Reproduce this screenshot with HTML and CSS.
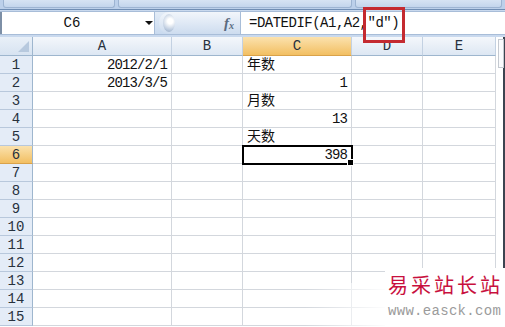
FILE: index.html
```html
<!DOCTYPE html>
<html lang="zh-CN">
<head>
    <meta charset="UTF-8">
    <meta name="viewport" content="width=device-width, initial-scale=1.0">
    <title>DATEDIF</title>
    <link rel="stylesheet" href="styles.css">
</head>
<body>
    <div class="window">
        <!-- Bottom edge of the ribbon -->
        <div class="ribbon-edge">
            <div class="rb-btn rb-1"></div>
            <div class="rb-btn rb-2"></div>
            <div class="rb-btn rb-3"></div>
        </div>

        <!-- Formula bar -->
        <div class="formula-bar">
            <div class="name-box">
                <span class="name-text">C6</span>
                <span class="caret"></span>
            </div>
            <div class="fx-knob">
                <span class="grip"></span>
                <span class="fx">f<sub>x</sub></span>
            </div>
            <div class="formula-input">=DATEDIF(A1,A2,"d")</div>
        </div>

        <!-- Sheet -->
        <div class="sheet-wrap">
            <div class="sheet" id="sheet"></div>
            <div class="vscroll">
                <div class="split-box"></div>
            </div>
        </div>

        <!-- Red highlight around the "d" argument -->
        <div class="mark-box"></div>

        <!-- Watermark -->
        <div class="fade"></div>
        <div class="watermark">
            <div class="wm-title">易采站长站</div>
            <div class="wm-url">www.easck.com</div>
        </div>
    </div>

    <script>
        const cols = ['A', 'B', 'C', 'D', 'E'];
        const values = {
            A1: '2012/2/1',
            A2: '2013/3/5',
            C1: '年数',
            C2: '1',
            C3: '月数',
            C4: '13',
            C5: '天数',
            C6: '398'
        };
        const active = { col: 'C', row: 6 };
        const sheet = document.getElementById('sheet');

        // header row
        const corner = document.createElement('div');
        corner.className = 'corner';
        sheet.appendChild(corner);
        cols.forEach(c => {
            const h = document.createElement('div');
            h.className = 'col-head' + (c === active.col ? ' hl' : '');
            h.textContent = c;
            sheet.appendChild(h);
        });

        for (let r = 1; r <= 15; r++) {
            const rh = document.createElement('div');
            rh.className = 'row-head' + (r === active.row ? ' hl' : '');
            rh.textContent = r;
            sheet.appendChild(rh);

            cols.forEach(c => {
                const cell = document.createElement('div');
                cell.className = 'cell';
                const v = values[c + r];
                if (v) {
                    cell.textContent = v;
                    if (/^[0-9\/]+$/.test(v)) cell.classList.add('num');
                }
                if (c === active.col && r === active.row) {
                    cell.classList.add('active');
                    const handle = document.createElement('span');
                    handle.className = 'handle';
                    cell.appendChild(handle);
                }
                sheet.appendChild(cell);
            });
        }
    </script>
</body>
</html>
```

FILE: styles.css
```css
body {
    margin: 0;
    font-family: "Liberation Mono", "Noto Sans CJK SC", monospace;
    background: #ffffff;
}

.window {
    width: 505px;
    height: 327px;
    position: relative;
    overflow: hidden;
    background: #c9d9ee;
}

/* Ribbon edge */
.ribbon-edge {
    height: 10px;
    display: flex;
    gap: 3px;
    padding: 0 3px 0 3px;
    background: #bcd0ea;
    border-bottom: 1px solid #6f8db3;
    box-sizing: border-box;
}

.rb-btn {
    height: 7px;
    background: linear-gradient(to bottom, #d6e3f3, #c3d5ec);
    border: 1px solid #9db4d2;
    border-top: none;
    border-radius: 0 0 3px 3px;
}

.rb-1 { width: 110px; }
.rb-2 { width: 232px; }
.rb-3 { flex: 1; }

/* Formula bar */
.formula-bar {
    height: 22px;
    margin-top: 1px;
    display: flex;
    background: linear-gradient(to bottom, #e3ecf7, #c9daef);
    border-top: 1px solid #a8bdd8;
    border-bottom: 1px solid #a8bdd8;
}

.name-box {
    width: 155px;
    background: #ffffff;
    border-left: 2px solid #7d8fa6;
    border-right: 1px solid #a8bdd8;
    display: flex;
    align-items: center;
    box-sizing: border-box;
    position: relative;
}

.name-text {
    width: 140px;
    text-align: center;
    font-size: 14px;
    color: #111;
}

.caret {
    width: 0;
    height: 0;
    border-left: 4px solid transparent;
    border-right: 4px solid transparent;
    border-top: 4px solid #111;
    margin-left: 3px;
}

.fx-knob {
    width: 82px;
    display: flex;
    align-items: center;
    justify-content: space-between;
    padding: 0 6px 0 4px;
    box-sizing: border-box;
    background: linear-gradient(to bottom, #f2f6fb, #cddcef);
    border-radius: 10px 0 0 10px;
    margin-left: 4px;
    border-right: 1px solid #a8bdd8;
}

.grip {
    width: 12px;
    height: 18px;
    border-radius: 50%;
    background: radial-gradient(circle at 60% 40%, #ffffff 20%, #b7c7dc 70%, #8ea3bf 100%);
}

.fx {
    font-family: "Liberation Serif", serif;
    font-style: italic;
    font-size: 15px;
    color: #5a6b80;
    font-weight: bold;
}

.fx sub {
    font-size: 10px;
    vertical-align: -1px;
}

.formula-input {
    flex: 1;
    background: #ffffff;
    font-size: 14px;
    letter-spacing: -0.5px;
    line-height: 22px;
    padding-left: 8px;
    color: #111;
}

/* Sheet */
.sheet-wrap {
    margin-top: 2px;
    display: flex;
}

.sheet {
    display: grid;
    grid-template-columns: 33px 139px 71px 109px 71px 73px;
    grid-template-rows: 19px repeat(15, 18px);
    background: #ffffff;
}

.corner {
    background: linear-gradient(to bottom, #e9f0f8, #d7e3f1);
    border-right: 1px solid #9eb6ce;
    border-bottom: 1px solid #9eb6ce;
    position: relative;
}

.corner::after {
    content: "";
    position: absolute;
    right: 3px;
    bottom: 3px;
    border-left: 11px solid transparent;
    border-bottom: 11px solid #b7c9de;
}

.col-head {
    background: linear-gradient(to bottom, #f4f7fb, #dde7f3);
    border-right: 1px solid #c3d1e2;
    border-bottom: 1px solid #9eb6ce;
    text-align: center;
    font-size: 14px;
    line-height: 18px;
    color: #27313d;
}

.row-head {
    background: #e4ecf7;
    border-right: 1px solid #9eb6ce;
    border-bottom: 1px solid #b8c8dc;
    text-align: center;
    font-size: 14px;
    line-height: 18px;
    color: #27313d;
}

.col-head.hl,
.row-head.hl {
    background: linear-gradient(to bottom, #fbe2ae, #f2bf62);
    border-bottom-color: #d9a24a;
}

.cell {
    border-right: 1px solid #d3d7dd;
    border-bottom: 1px solid #d3d7dd;
    font-size: 14px;
    line-height: 19px;
    padding: 0 4px;
    color: #111;
    white-space: nowrap;
    position: relative;
}

.cell.num {
    text-align: right;
    letter-spacing: -0.9px;
    padding-right: 4px;
}

.cell.active {
    outline: 2px solid #000000;
    outline-offset: -1px;
    z-index: 2;
}

.handle {
    position: absolute;
    right: -3px;
    bottom: -3px;
    width: 5px;
    height: 5px;
    background: #000000;
    border: 1px solid #ffffff;
}

.vscroll {
    flex: 1;
    height: 290px;
    background: #ffffff;
    border-right: 2px solid #3c4450;
    position: relative;
}

.split-box {
    position: absolute;
    left: 2px;
    top: 2px;
    width: 4px;
    height: 27px;
    border: 1px solid #c4c9d0;
    background: #fafbfd;
}

/* Overlays */
.mark-box {
    position: absolute;
    left: 363px;
    top: 7px;
    width: 36px;
    height: 30px;
    border: 3px solid #c42a30;
}

.fade {
    position: absolute;
    left: 305px;
    top: 283px;
    width: 80px;
    height: 44px;
    background: linear-gradient(to right, rgba(255, 255, 255, 0), rgba(255, 255, 255, 0.95));
}

.watermark {
    position: absolute;
    left: 385px;
    top: 268px;
    width: 120px;
    height: 59px;
    background: #ffffff;
    padding: 5px 0 0 3px;
    box-sizing: border-box;
}

.wm-title {
    font-family: "Noto Sans CJK SC", sans-serif;
    font-size: 20px;
    line-height: 24px;
    letter-spacing: 3px;
    color: #c8103e;
}

.wm-url {
    font-family: "Liberation Mono", monospace;
    font-size: 14px;
    letter-spacing: 0.3px;
    color: #9b9b9b;
    margin-top: 6px;
}
```
